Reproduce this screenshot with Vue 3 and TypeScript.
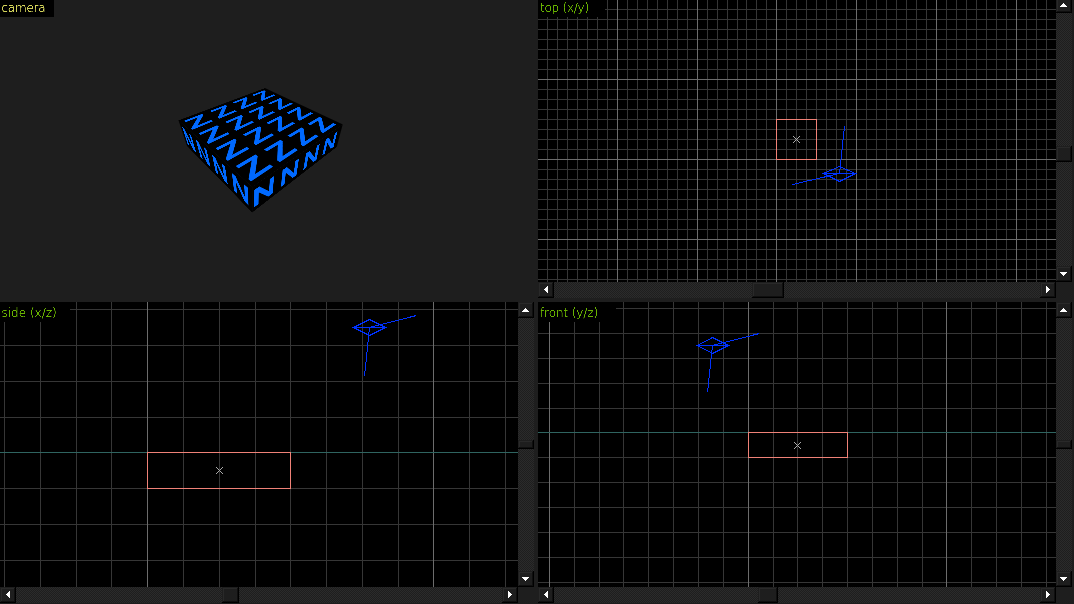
<script setup lang="ts">
type Point = [number, number]

interface View {
  id: string
  title: string
  labelWidth: number
  labelHeight: number
  height: number
  columns: number[]
  rows: number[]
  majorColumns: number[]
  majorRows: number[]
  axis: number | null
  box: { x: number; y: number; w: number; h: number }
  center: Point
  eye: { x: number; y: number; left: number; right: number; top: number; bottom: number }
  rays: Point[]
  vertical: { offset: number; size: number }
  horizontal: { offset: number; size: number }
}

const series = (from: number, to: number, step: number): number[] => {
  const out: number[] = []
  for (let v = from; v <= to; v += step) out.push(v)
  return out
}

const views: View[] = [
  {
    id: 'top', title: 'top (x/y)', labelWidth: 67, labelHeight: 17, height: 282,
    columns: [...series(9, 199, 10), ...series(208, 508, 10)],
    rows: series(9, 279, 10),
    majorColumns: [79, 159, 238, 318, 398, 478],
    majorRows: [79, 159, 239],
    axis: null,
    box: { x: 238, y: 119, w: 40, h: 40 },
    center: [258, 139],
    eye: { x: 301, y: 173, left: 285, right: 317, top: 166, bottom: 181 },
    rays: [[306, 126], [254, 184]],
    vertical: { offset: 133, size: 16 },
    horizontal: { offset: 198, size: 32 },
  },
  {
    id: 'side', title: 'side (x/z)', labelWidth: 70, labelHeight: 20, height: 285,
    columns: [4, 40, 76, 111, 147, 183, 219, 255, 290, 326, 362, 398, 433, 469, 505],
    rows: [7, 43, 79, 115, 150, 186, 222, 258],
    majorColumns: [147, 433],
    majorRows: [],
    axis: 150,
    box: { x: 147, y: 150, w: 143, h: 36 },
    center: [219, 168],
    eye: { x: 369, y: 25, left: 353, right: 385, top: 17, bottom: 33 },
    rays: [[364, 74], [416, 13]],
    vertical: { offset: 122, size: 9 },
    horizontal: { offset: 206, size: 17 },
  },
  {
    id: 'front', title: 'front (y/z)', labelWidth: 78, labelHeight: 20, height: 285,
    columns: [11, 36, 61, 85, 110, 135, 160, 185, 210, 235, 259, 284, 309, 334, 359, 384, 408, 433, 458, 483, 508],
    rows: [6, 31, 56, 81, 106, 130, 155, 180, 205, 230, 255, 280],
    majorColumns: [11, 210, 408],
    majorRows: [],
    axis: 130,
    box: { x: 210, y: 130, w: 99, h: 25 },
    center: [259, 143],
    eye: { x: 174, y: 43, left: 159, right: 190, top: 35, bottom: 51 },
    rays: [[169, 90], [221, 31]],
    vertical: { offset: 122, size: 9 },
    horizontal: { offset: 204, size: 20 },
  },
]

// Perspective matrix taking a w × h rectangle onto four corners, clockwise from top left.
const project = (w: number, h: number, q: [Point, Point, Point, Point]): string => {
  const [[x0, y0], [x1, y1], [x2, y2], [x3, y3]] = q
  const dx1 = x1 - x2, dx2 = x3 - x2, sx = x0 - x1 + x2 - x3
  const dy1 = y1 - y2, dy2 = y3 - y2, sy = y0 - y1 + y2 - y3
  const det = dx1 * dy2 - dx2 * dy1
  const g = (sx * dy2 - dx2 * sy) / det
  const k = (dx1 * sy - sx * dy1) / det
  const a = x1 - x0 + g * x1, b = x3 - x0 + k * x3
  const d = y1 - y0 + g * y1, e = y3 - y0 + k * y3
  return `matrix3d(${[a / w, d / w, 0, g / w, b / h, e / h, 0, k / h, 0, 0, 1, 0, x0, y0, 0, 1].join(',')})`
}

const left: Point = [178.5, 120.3]
const back: Point = [265, 88]
const right: Point = [342.7, 124.5]
const front: Point = [252.2, 187]
const leftBase: Point = [187, 146]
const rightBase: Point = [336.7, 147]
const frontBase: Point = [252.2, 212.5]

const faces = [
  { id: 'west', letter: 'N', count: 4, transform: project(400, 100, [left, front, frontBase, leftBase]) },
  { id: 'south', letter: 'N', count: 4, transform: project(400, 100, [front, right, rightBase, frontBase]) },
  { id: 'roof', letter: 'Z', count: 16, transform: project(400, 400, [left, back, right, front]) },
]

const arrows: Record<string, string> = {
  up: 'M7 6h1v1h1v1h1v1h1v1H4V9h1V8h1V7h1z',
  down: 'M4 6h7v1h-1v1H9v1H8v1H7V9H6V8H5V7H4z',
  left: 'M9 4h1v7H9v-1H8V9H7V8H6V7h1V6h1V5h1z',
  right: 'M6 4h1v1h1v1h1v1h1v1H9v1H8v1H7v1H6z',
}
</script>

<template>
  <main class="editor">
    <svg class="defs" width="0" height="0">
      <filter id="crisp" color-interpolation-filters="sRGB">
        <feComponentTransfer><feFuncA type="linear" slope="3.2" intercept="-0.6" /></feComponentTransfer>
      </filter>
    </svg>
    <section class="camera">
      <span class="label yellow"><span class="ink">camera</span></span>
      <div class="scene">
        <div v-for="f in faces" :key="f.id" class="face" :class="f.id" :style="{ transform: f.transform }">
          <span v-for="n in f.count" :key="n" class="cell"><span class="letter">{{ f.letter }}</span></span>
        </div>
      </div>
    </section>

    <section v-for="v in views" :key="v.id" class="pane" :class="v.id">
      <div class="canvas">
        <svg width="518" :height="v.height" shape-rendering="crispEdges">
          <rect v-for="y in v.rows" :key="'r' + y" class="minor" x="0" :y="y" width="518" height="1" />
          <rect v-for="x in v.columns" :key="'c' + x" class="minor" :x="x" y="0" width="1" :height="v.height" />
          <rect v-for="y in v.majorRows" :key="'R' + y" class="major" x="0" :y="y" width="518" height="1" />
          <rect v-for="x in v.majorColumns" :key="'C' + x" class="major" :x="x" y="0" width="1" :height="v.height" />
          <rect v-if="v.axis !== null" class="axis" x="0" :y="v.axis" width="518" height="1" />
          <rect class="brush" :x="v.box.x + 0.5" :y="v.box.y + 0.5" :width="v.box.w" :height="v.box.h" />
          <path class="cross" :d="`M${v.center[0] - 3} ${v.center[1] - 3}l7 7m0 -7l-7 7`" />
          <g class="eye">
            <path :d="`M${v.eye.left + 0.5} ${v.eye.y + 0.5}L${v.eye.x + 0.5} ${v.eye.top + 0.5}L${v.eye.right + 0.5} ${v.eye.y + 0.5}L${v.eye.x + 0.5} ${v.eye.bottom + 0.5}ZH${v.eye.right}`" />
            <path v-for="(r, i) in v.rays" :key="i" :d="`M${v.eye.x + 0.5} ${v.eye.y + 0.5}L${r[0] + 0.5} ${r[1] + 0.5}`" />
          </g>
          <rect x="0" y="0" :width="v.labelWidth" :height="v.labelHeight" />
        </svg>
        <span class="label green"><span class="ink">{{ v.title }}</span></span>
      </div>
      <div class="bar vertical">
        <span class="knob arrow first"><svg width="16" height="16" shape-rendering="crispEdges"><path :d="arrows.up" /></svg></span>
        <span class="lead" :style="{ height: v.vertical.offset + 'px' }"></span>
        <span class="knob" :style="{ height: v.vertical.size + 'px' }"></span>
        <span class="rest"></span>
        <span class="knob arrow"><svg width="16" height="16" shape-rendering="crispEdges"><path :d="arrows.down" /></svg></span>
      </div>
      <div class="bar horizontal">
        <span class="knob arrow"><svg width="16" height="16" shape-rendering="crispEdges"><path :d="arrows.left" /></svg></span>
        <span class="lead" :style="{ width: v.horizontal.offset + 'px' }"></span>
        <span class="knob" :style="{ width: v.horizontal.size + 'px' }"></span>
        <span class="rest"></span>
        <span class="knob arrow"><svg width="16" height="16" shape-rendering="crispEdges"><path :d="arrows.right" /></svg></span>
      </div>
    </section>
  </main>
</template>

<style>
body {
  margin: 0;
  background: #1e1e1e;
  overflow: hidden;
}
</style>

<style scoped>
.editor {
  width: 1074px;
  height: 604px;
  display: grid;
  grid-template-columns: 534px 536px;
  grid-template-rows: 298px 302px;
  gap: 4px;
  overflow: hidden;
  background: #1e1e1e;
}
.defs {
  position: absolute;
}
.camera,
.canvas {
  position: relative;
}
.label {
  position: absolute;
  left: 0;
  top: 0;
  box-sizing: border-box;
  padding-left: 1.5px;
  font: 200 12px/17px "DejaVu Sans", "DejaVu Sans Light", sans-serif;
  letter-spacing: -0.25px;
  white-space: nowrap;
}
.ink {
  display: block;
  filter: url(#crisp);
}
.yellow {
  width: 54px;
  height: 17px;
  color: #d2d25a;
  background: #000;
}
.green {
  color: #69b400;
}
.top .green,
.front .green {
  padding-left: 2px;
}
.side .green,
.front .green {
  top: 3px;
}
.front .green {
  letter-spacing: -0.1px;
}
.side .green {
  letter-spacing: 0;
}
.scene {
  position: absolute;
  inset: 0;
}
.face {
  position: absolute;
  left: 0;
  top: 0;
  width: 400px;
  display: grid;
  grid-template-columns: repeat(4, 100px);
  grid-auto-rows: 100px;
  background: #000;
  transform-origin: 0 0;
}
.cell {
  display: flex;
  align-items: center;
  justify-content: center;
}
.letter {
  font: 92px/100px "Liberation Sans", Arial, sans-serif;
  color: #0069ff;
  -webkit-text-stroke: 5px #0069ff;
}
.west .letter {
  transform: scaleX(1.2);
}
.south .letter {
  transform: translateX(-10px) scaleX(1.2);
}
.roof .letter {
  transform: translateX(-4px) scaleX(1.35);
}
.pane {
  display: grid;
  grid-template-columns: 518px 16px;
  grid-template-rows: 285px 16px;
  overflow: hidden;
}
.pane.top {
  grid-template-rows: 282px 16px;
}
.canvas {
  background: #000;
  overflow: hidden;
}
svg {
  display: block;
}
.minor {
  fill: #363636;
}
.major {
  fill: #6c6c6c;
}
.axis {
  fill: #2f6460;
}
.brush {
  fill: none;
  stroke: #f08278;
}
.cross {
  fill: none;
  stroke: #aaa;
}
.eye {
  fill: none;
  stroke: #0032ff;
}
.bar {
  display: flex;
  overflow: hidden;
  background: repeating-conic-gradient(#2b2b2b 0 25%, #1e1e1e 0 50%) 0 0 / 2px 2px;
}
.vertical {
  flex-direction: column;
}
.lead,
.knob {
  flex: none;
}
.rest {
  flex: 1;
}
.knob {
  box-sizing: border-box;
  background: #1e1e1e;
  box-shadow: inset -1px -1px #000, inset 1px 1px #1e1e1e, inset -2px -2px #0f0f0f, inset 2px 2px #292929;
}
.arrow {
  width: 16px;
  height: 16px;
}
.arrow path {
  fill: #fff;
}
.top .first {
  margin-top: -3px;
}
</style>
